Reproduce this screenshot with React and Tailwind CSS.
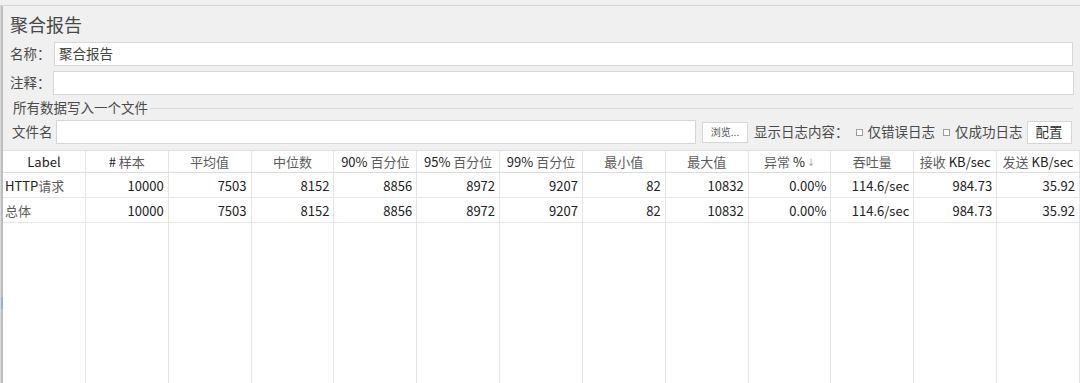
import React from "react";

const headers = [
  "Label",
  "# 样本",
  "平均值",
  "中位数",
  "90% 百分位",
  "95% 百分位",
  "99% 百分位",
  "最小值",
  "最大值",
  "异常 %",
  "吞吐量",
  "接收 KB/sec",
  "发送 KB/sec",
];

const rows = [
  ["HTTP请求", "10000", "7503", "8152", "8856", "8972", "9207", "82", "10832", "0.00%", "114.6/sec", "984.73", "35.92"],
  ["总体", "10000", "7503", "8152", "8856", "8972", "9207", "82", "10832", "0.00%", "114.6/sec", "984.73", "35.92"],
];

function Mixed({ text }) {
  const parts = text.split(/([\u4e00-\u9fff]+)/);
  return (
    <span className="whitespace-pre">
      {parts.map((p, i) =>
        /[\u4e00-\u9fff]/.test(p) ? (
          <span key={i} className="text-[#5c5c5c]">{p}</span>
        ) : (
          <span key={i}>{p}</span>
        )
      )}
    </span>
  );
}

function Checkbox() {
  return <span className="inline-block w-[7px] h-[7px] border border-[#9c9c9c] bg-white" />;
}

export default function App() {
  return (
    <div className="w-[1080px] h-[383px] overflow-hidden bg-[#f0f0f0] flex flex-col font-['Noto_Sans_CJK_SC','Noto_Sans',sans-serif] text-[#3a3a3a]">
      {/* top bar */}
      <div className="h-[6px] shrink-0 border-b border-[#d6d6d6]" />
      <div className="flex flex-1 min-h-0">
        {/* left strip */}
        <div className="w-[3px] shrink-0 flex flex-col bg-[#bdbdbd] border-l border-[#dadada]">
          <div className="h-[291px]" />
          <div className="h-[12px] bg-[#8fb3d3]" />
          <div className="flex-1" />
        </div>
        <div className="flex-1 flex flex-col min-w-0">
          {/* title */}
          <div className="h-[36px] flex items-center pl-[7px] text-[18px] leading-none text-[#474747]">
            聚合报告
          </div>
          {/* name */}
          <div className="h-[24px] flex items-center">
            <div className="w-[51px] pl-[7px] text-[13.5px] leading-none text-[#4a4a4a]">名称：</div>
            <div className="flex-1 h-full mr-[7px] bg-white border border-[#d6d6d6] flex items-center pl-[4px] text-[13.5px] leading-none text-[#444]">
              聚合报告
            </div>
          </div>
          {/* comment */}
          <div className="h-[24px] mt-[5px] flex items-center">
            <div className="w-[50px] pl-[7px] text-[13.5px] leading-none text-[#4a4a4a]">注释：</div>
            <div className="flex-1 h-full mr-[6px] bg-white border border-[#d6d6d6]" />
          </div>
          {/* legend */}
          <div className="h-[16px] mt-[5px] flex items-center pr-[7px]">
            <span className="pl-[10px] pr-[2px] text-[13.5px] leading-none text-[#4a4a4a]">所有数据写入一个文件</span>
            <div className="flex-1 border-t border-[#d8d8d8]" />
          </div>
          {/* filename row */}
          <div className="h-[24px] mt-[4px] flex items-center text-[13.5px] leading-none text-[#4a4a4a]">
            <div className="w-[53px] pl-[9px]">文件名</div>
            <div className="w-[640px] h-full bg-white border border-[#d6d6d6]" />
            <div className="ml-[6px] w-[46px] h-[21px] bg-white border border-[#d6d6d6] flex items-center justify-center text-[10px] text-[#555]">
              浏览...
            </div>
            <div className="ml-[6px]">显示日志内容：</div>
            <div className="ml-[7px] flex items-center"><Checkbox /></div>
            <div className="ml-[5px]">仅错误日志</div>
            <div className="ml-[8px] flex items-center"><Checkbox /></div>
            <div className="ml-[5px]">仅成功日志</div>
            <div className="ml-[4px] w-[45px] h-[23px] bg-white border border-[#d6d6d6] flex items-center justify-center text-[13.5px] text-[#333]">
              配置
            </div>
          </div>
          {/* table */}
          <div className="mt-[6px] flex-1 flex flex-col bg-white border-t border-[#dedede] text-[13px] leading-none text-[#222]">
            <div className="grid grid-cols-[repeat(13,minmax(0,1fr))] h-[22px] border-b border-[#dcdcdc]">
              {headers.map((h, i) => (
                <div key={i} className="border-r border-[#e4e4e4] flex items-center justify-center whitespace-nowrap">
                  <Mixed text={h} />
                  {i === 9 && <span className="ml-[2px] text-[8px] text-[#888]">↓</span>}
                </div>
              ))}
            </div>
            {rows.map((r, ri) => (
              <div key={ri} className="grid grid-cols-[repeat(13,minmax(0,1fr))] h-[25px] border-b border-[#e6e6e6]">
                {r.map((c, ci) => (
                  <div
                    key={ci}
                    className={
                      ci === 0
                        ? "border-r border-[#e4e4e4] flex items-center justify-start pl-[2px] whitespace-nowrap"
                        : "border-r border-[#e4e4e4] flex items-center justify-end pr-[4px] whitespace-nowrap"
                    }
                  >
                    <Mixed text={c} />
                  </div>
                ))}
              </div>
            ))}
            <div className="grid grid-cols-[repeat(13,minmax(0,1fr))] flex-1">
              {headers.map((_, i) => (
                <div key={i} className="border-r border-[#e4e4e4]" />
              ))}
            </div>
          </div>
        </div>
      </div>
    </div>
  );
}
